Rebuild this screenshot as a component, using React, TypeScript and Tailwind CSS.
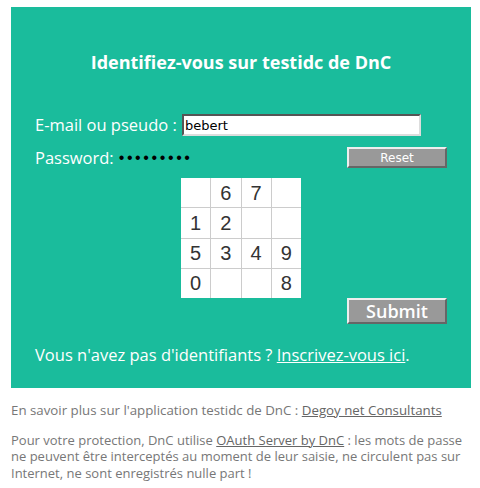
const digits = ['', '6', '7', '', '1', '2', '', '', '5', '3', '4', '9', '0', '', '', '8'];

const App = () => {
  return (
    <div className="w-[480px] h-[488px] bg-white pt-[7px] pl-[11px] pr-[9px] font-['Open_Sans',sans-serif]">
      {/* Bloc de connexion */}
      <div className="bg-[#1abc9c] h-[381px] pl-[24px] pr-[24px] flex flex-col text-white">
        <h1 className="mt-[43px] h-[24px] leading-[24px] text-center text-[18px] font-bold">
          Identifiez-vous sur testidc de DnC
        </h1>

        <div className="mt-[40px] h-[22px] flex items-center">
          <label className="text-[16.5px] leading-[22px] w-[147px] shrink-0 whitespace-nowrap">E-mail ou pseudo :</label>
          <input
            type="text"
            defaultValue="bebert"
            className="w-[239px] h-[22px] bg-white border-2 border-t-[#555] border-l-[#555] border-b-[#ddd] border-r-[#ddd] px-[1px] text-[13px] text-black font-['DejaVu_Sans',sans-serif] outline-none"
          />
        </div>

        <div className="mt-[11px] h-[21px] flex items-center justify-between">
          <div className="flex items-center">
            <span className="text-[16.5px] leading-[21px]">Password:</span>
            <span className="ml-[5px] text-black text-[16px] tracking-[2.6px] font-['Liberation_Sans',sans-serif] leading-[21px]">
              •••••••••
            </span>
          </div>
          <button className="w-[100px] h-[21px] bg-[#999] border-2 border-t-[#eee] border-l-[#eee] border-b-[#666] border-r-[#666] text-[12px] text-white font-['DejaVu_Sans',sans-serif] leading-none">
            Reset
          </button>
        </div>

        {/* Pavé numérique */}
        <div className="mt-[10px] mx-auto w-[120px] h-[120px] grid grid-cols-4 grid-rows-4 gap-px bg-[#ccc]">
          {digits.map((d, i) => (
            <div
              key={i}
              className="bg-white flex items-center justify-center text-[20px] text-[#333] font-['Liberation_Sans',sans-serif]"
            >
              {d}
            </div>
          ))}
        </div>

        <button className="self-end w-[100px] h-[26px] bg-[#999] border-2 border-t-[#eee] border-l-[#eee] border-b-[#666] border-r-[#666] text-[18px] font-semibold text-white leading-none">
          Submit
        </button>

        <p className="mt-[21px] text-[16.5px] leading-[20px]">
          Vous n'avez pas d'identifiants ? <a href="#" className="underline">Inscrivez-vous ici</a>.
        </p>
      </div>

      {/* Pied de page */}
      <p className="mt-[14px] text-[13.3px] leading-[16.5px] text-[#777]">
        En savoir plus sur l'application testidc de DnC : <a href="#" className="underline text-[#666]">Degoy net Consultants</a>
      </p>
      <p className="mt-[13px] text-[13px] leading-[16.5px] text-[#777]">
        Pour votre protection, DnC utilise <a href="#" className="underline text-[#666]">OAuth Server by DnC</a> : les mots de passe ne peuvent être interceptés au moment de leur saisie, ne circulent pas sur Internet, ne sont enregistrés nulle part !
      </p>
    </div>
  );
};

export default App
